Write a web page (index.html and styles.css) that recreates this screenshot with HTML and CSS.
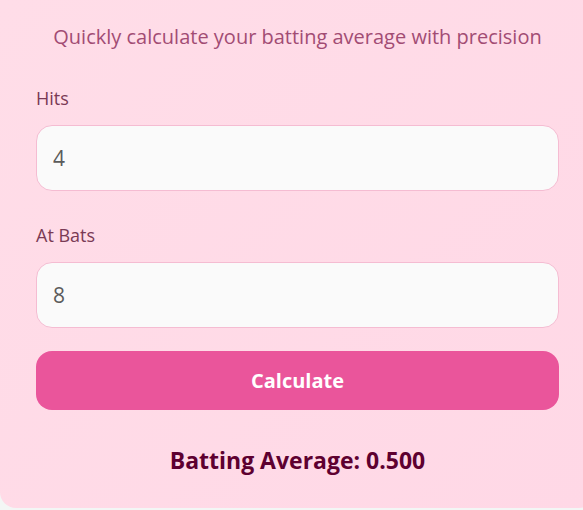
FILE: index.html
```html
<!DOCTYPE html>
<html lang="en">
<head>
    <meta charset="UTF-8">
    <meta name="viewport" content="width=device-width, initial-scale=1.0">
    <title>Batting Average Calculator</title>
    <link rel="stylesheet" href="styles.css">
</head>
<body>
    <div class="calc-card">
        <p class="subtitle">Quickly calculate your batting average with precision</p>

        <div class="field">
            <label for="hits">Hits</label>
            <input type="number" id="hits" class="form-input" value="4">
        </div>

        <div class="field">
            <label for="at-bats">At Bats</label>
            <input type="number" id="at-bats" class="form-input" value="8">
        </div>

        <button class="btn-calc">Calculate</button>

        <p class="result">Batting Average: 0.500</p>
    </div>
</body>
</html>
```

FILE: styles.css
```css
* {
    box-sizing: border-box;
    margin: 0;
    padding: 0;
}
body {
    font-family: 'Open Sans', 'Noto Sans', sans-serif;
    background-color: #f3f6f5;
    overflow: hidden;
    height: 510px;
}

.calc-card {
    width: 595px;
    height: 508px;
    padding: 23px 36px 0;
    background: linear-gradient(135deg, #ffdde8 0%, #ffd8e6 100%);
    border-radius: 0 0 16px 16px;
}

.subtitle {
    text-align: center;
    font-size: 20px;
    color: #a24c74;
    margin-bottom: 36px;
}

.field {
    display: flex;
    flex-direction: column;
}
.field + .field {
    margin-top: 32px;
}
.field label {
    font-size: 18px;
    color: #7a3a55;
    margin-bottom: 15px;
}
.form-input {
    height: 66px;
    width: 100%;
    padding: 0 16px;
    border: 1px solid #f5bcd2;
    border-radius: 16px;
    background-color: #fafafa;
    font-family: inherit;
    font-size: 21px;
    color: #5b5b5b;
    outline: none;
    -moz-appearance: textfield;
}
.form-input::-webkit-outer-spin-button,
.form-input::-webkit-inner-spin-button {
    -webkit-appearance: none;
}

.btn-calc {
    display: block;
    width: 100%;
    height: 59px;
    margin-top: 23px;
    border: none;
    border-radius: 16px;
    background-color: #ea559b;
    color: #ffffff;
    font-family: inherit;
    font-size: 20px;
    font-weight: 700;
    cursor: pointer;
}

.result {
    margin-top: 34px;
    text-align: center;
    font-size: 23px;
    font-weight: 700;
    color: #5e0030;
}
```
